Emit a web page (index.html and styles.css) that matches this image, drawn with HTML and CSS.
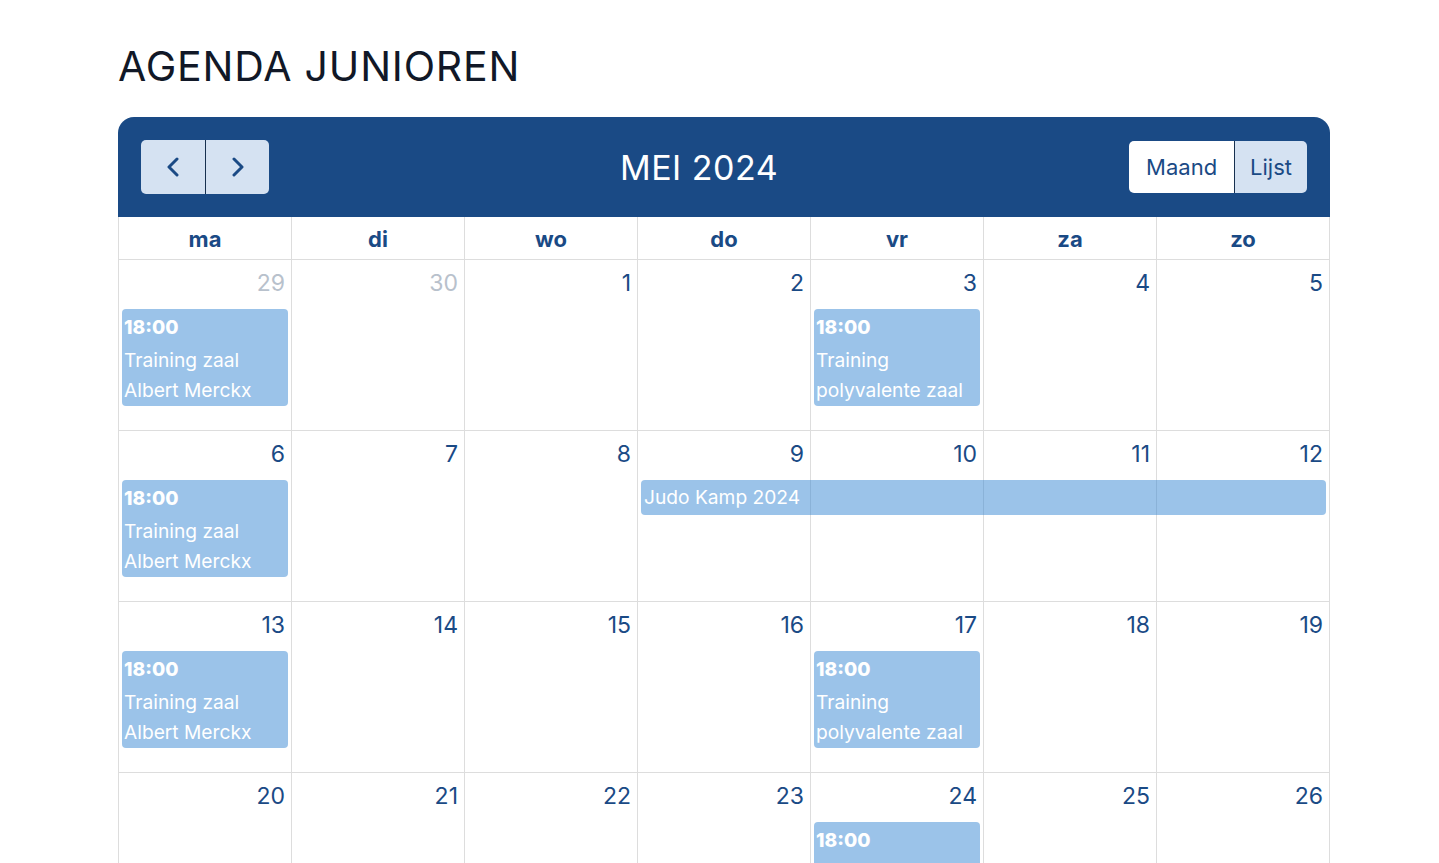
FILE: index.html
```html
<!DOCTYPE html>
<html lang="nl">
<head>
<meta charset="utf-8">
<title>Agenda Junioren</title>
<link rel="stylesheet" href="styles.css">
</head>
<body>
<main class="page">
  <h1 class="page-title">AGENDA JUNIOREN</h1>
  <section class="calendar">
    <header class="cal-toolbar">
      <div class="btn-group">
        <button class="btn btn-nav" aria-label="Vorige">
          <svg width="14" height="20" viewBox="0 0 14 20"><path d="M11 2 L3 10 L11 18" fill="none" stroke="#1a4a85" stroke-width="3" stroke-linecap="round" stroke-linejoin="round"/></svg>
        </button>
        <button class="btn btn-nav" aria-label="Volgende">
          <svg width="14" height="20" viewBox="0 0 14 20"><path d="M3 2 L11 10 L3 18" fill="none" stroke="#1a4a85" stroke-width="3" stroke-linecap="round" stroke-linejoin="round"/></svg>
        </button>
      </div>
      <h2 class="cal-title">MEI 2024</h2>
      <div class="btn-group">
        <button class="btn btn-view active">Maand</button>
        <button class="btn btn-view">Lijst</button>
      </div>
    </header>

    <div class="dow-row">
      <div class="dow">ma</div><div class="dow">di</div><div class="dow">wo</div><div class="dow">do</div><div class="dow">vr</div><div class="dow">za</div><div class="dow">zo</div>
    </div>

    <div class="week">
      <div class="day c1 other">29</div>
      <div class="day c2 other">30</div>
      <div class="day c3">1</div>
      <div class="day c4">2</div>
      <div class="day c5">3</div>
      <div class="day c6">4</div>
      <div class="day c7">5</div>
      <div class="event c1"><div class="ev-time">18:00</div><div class="ev-title">Training zaal Albert Merckx</div></div>
      <div class="event c5"><div class="ev-time">18:00</div><div class="ev-title">Training polyvalente zaal</div></div>
    </div>

    <div class="week">
      <div class="day c1">6</div>
      <div class="day c2">7</div>
      <div class="day c3">8</div>
      <div class="day c4">9</div>
      <div class="day c5">10</div>
      <div class="day c6">11</div>
      <div class="day c7">12</div>
      <div class="event c1"><div class="ev-time">18:00</div><div class="ev-title">Training zaal Albert Merckx</div></div>
      <div class="event allday c4 span4"><div class="ev-title">Judo Kamp 2024</div></div>
    </div>

    <div class="week">
      <div class="day c1">13</div>
      <div class="day c2">14</div>
      <div class="day c3">15</div>
      <div class="day c4">16</div>
      <div class="day c5">17</div>
      <div class="day c6">18</div>
      <div class="day c7">19</div>
      <div class="event c1"><div class="ev-time">18:00</div><div class="ev-title">Training zaal Albert Merckx</div></div>
      <div class="event c5"><div class="ev-time">18:00</div><div class="ev-title">Training polyvalente zaal</div></div>
    </div>

    <div class="week">
      <div class="day c1">20</div>
      <div class="day c2">21</div>
      <div class="day c3">22</div>
      <div class="day c4">23</div>
      <div class="day c5">24</div>
      <div class="day c6">25</div>
      <div class="day c7">26</div>
      <div class="event c5"><div class="ev-time">18:00</div><div class="ev-title">Training polyvalente zaal</div></div>
    </div>

    <div class="week">
      <div class="day c1">27</div>
      <div class="day c2">28</div>
      <div class="day c3">29</div>
      <div class="day c4">30</div>
      <div class="day c5">31</div>
      <div class="day c6 other">1</div>
      <div class="day c7 other">2</div>
      <div class="event c1"><div class="ev-time">18:00</div><div class="ev-title">Training zaal Albert Merckx</div></div>
      <div class="event c5"><div class="ev-time">18:00</div><div class="ev-title">Training polyvalente zaal</div></div>
    </div>
  </section>
</main>
</body>
</html>
```

FILE: styles.css
```css
* { box-sizing: border-box; }

body {
  margin: 0;
  background: #ffffff;
  font-family: Inter, "Noto Sans", "Liberation Sans", sans-serif;
  color: #1a4a85;
}

.page {
  padding: 42px 0 0 118px;
  width: 1330px;
}

.page-title {
  margin: 0 0 26px;
  font-size: 41px;
  line-height: 49px;
  font-weight: 400;
  letter-spacing: 0.8px;
  color: #111827;
}

.calendar {
  width: 1212px;
}

.cal-toolbar {
  height: 100px;
  background: #1a4a85;
  border-radius: 16px 16px 0 0;
  padding: 0 23px;
  display: flex;
  align-items: center;
  justify-content: space-between;
}

.cal-title {
  margin: 0;
  font-size: 34px;
  font-weight: 400;
  letter-spacing: 0.5px;
  color: #ffffff;
}

.btn-group {
  display: flex;
  border-radius: 5px;
  overflow: hidden;
}

.btn {
  border: 0;
  margin: 0;
  font-family: inherit;
  color: #1a4a85;
  background: #d5e2f2;
  display: flex;
  align-items: center;
  justify-content: center;
  cursor: pointer;
}

.btn + .btn {
  border-left: 1px solid #17304f;
}

.btn-nav {
  width: 64px;
  height: 54px;
}

.btn-view {
  height: 52px;
  font-size: 22px;
  padding: 0 15px;
}

.btn-view.active {
  background: #ffffff;
  width: 105px;
}

.dow-row {
  display: grid;
  grid-template-columns: repeat(7, 1fr);
  border-left: 1px solid #dddddd;
}

.dow {
  border-right: 1px solid #dddddd;
  border-bottom: 1px solid #dddddd;
  text-align: center;
  font-weight: 700;
  font-size: 22px;
  line-height: 44px;
  height: 43px;
}

.week {
  display: grid;
  grid-template-columns: repeat(7, 1fr);
  grid-template-rows: 49px auto 1fr;
  height: 171px;
  border-left: 1px solid #dddddd;
}

.day {
  grid-row: 1 / -1;
  border-right: 1px solid #dddddd;
  border-bottom: 1px solid #dddddd;
  text-align: right;
  font-size: 23px;
  line-height: 36px;
  padding: 5px 6px 0 0;
}

.day.other { color: #b8c1cc; }

.c1 { grid-column: 1; }
.c2 { grid-column: 2; }
.c3 { grid-column: 3; }
.c4 { grid-column: 4; }
.c5 { grid-column: 5; }
.c6 { grid-column: 6; }
.c7 { grid-column: 7; }
.c4.span4 { grid-column: 4 / span 4; }

.event {
  grid-row: 2;
  margin: 0 4px 0 3px;
  background: rgba(55, 135, 211, 0.5);
  border-radius: 4px;
  color: #ffffff;
  font-size: 19.2px;
  padding: 3px 3px 1px 2px;
  align-self: start;
}

.ev-time {
  font-weight: 800;
  line-height: 30px;
  margin-bottom: 3px;
}

.ev-title {
  line-height: 30px;
}

.event.allday {
  padding: 2px 3px 3px 3px;
}
```
